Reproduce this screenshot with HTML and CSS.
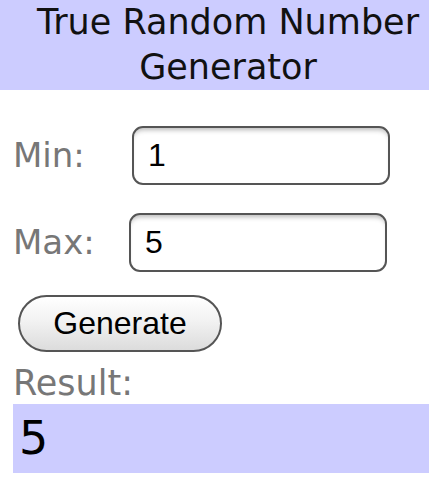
FILE: index.html
```html
<!DOCTYPE html>
<html>
<head>
<meta charset="utf-8">
<link rel="stylesheet" href="styles.css">
</head>
<body>
<header class="title">True Random Number Generator</header>
<main class="content">
  <div class="row row-min">
    <label class="label label-min" for="min">Min:</label>
    <input class="field" id="min" type="text" value="1">
  </div>
  <div class="row row-max">
    <label class="label label-max" for="max">Max:</label>
    <input class="field" id="max" type="text" value="5">
  </div>
  <button class="btn" type="button">Generate</button>
  <div class="result-label">Result:</div>
  <div class="result">5</div>
</main>
</body>
</html>
```

FILE: styles.css
```css
html, body {
  margin: 0;
  padding: 0;
  background: #fff;
  overflow: hidden;
}

.title {
  background: #ccccff;
  font-family: "DejaVu Sans", sans-serif;
  font-size: 35px;
  line-height: 45px;
  color: #111;
  text-align: center;
  padding-left: 27px;
}

.content {
  padding-left: 13px;
}

.row {
  display: flex;
  align-items: center;
  height: 59px;
}

.row-min {
  margin-top: 36px;
}

.row-max {
  margin-top: 28px;
}

.label {
  font-family: "DejaVu Sans", sans-serif;
  font-size: 34px;
  color: #777;
  margin-top: -2px;
}

.label-min {
  width: 119px;
}

.label-max {
  width: 116px;
}

.field {
  box-sizing: border-box;
  width: 258px;
  height: 59px;
  border: 2px solid #555;
  border-radius: 11px;
  background: #fff;
  box-shadow: inset 0 5px 5px -3px rgba(0, 0, 0, 0.28);
  font-family: "Liberation Sans", sans-serif;
  font-size: 32px;
  color: #000;
  padding: 0 0 0 14px;
  margin: 0;
  outline: none;
}

.btn {
  display: block;
  box-sizing: border-box;
  width: 204px;
  height: 57px;
  margin: 23px 0 0 5px;
  border: 2px solid #555;
  border-radius: 29px;
  background: linear-gradient(#ffffff, #f2f2f2 45%, #dcdcdc);
  font-family: "Liberation Sans", sans-serif;
  font-size: 32px;
  color: #000;
  padding: 0;
}

.result-label {
  font-family: "DejaVu Sans", sans-serif;
  font-size: 35px;
  line-height: 42px;
  padding-top: 10px;
  color: #777;
}

.result {
  background: #ccccff;
  font-family: "DejaVu Sans", sans-serif;
  font-size: 46px;
  line-height: 69px;
  color: #000;
  padding-left: 6px;
}
```
